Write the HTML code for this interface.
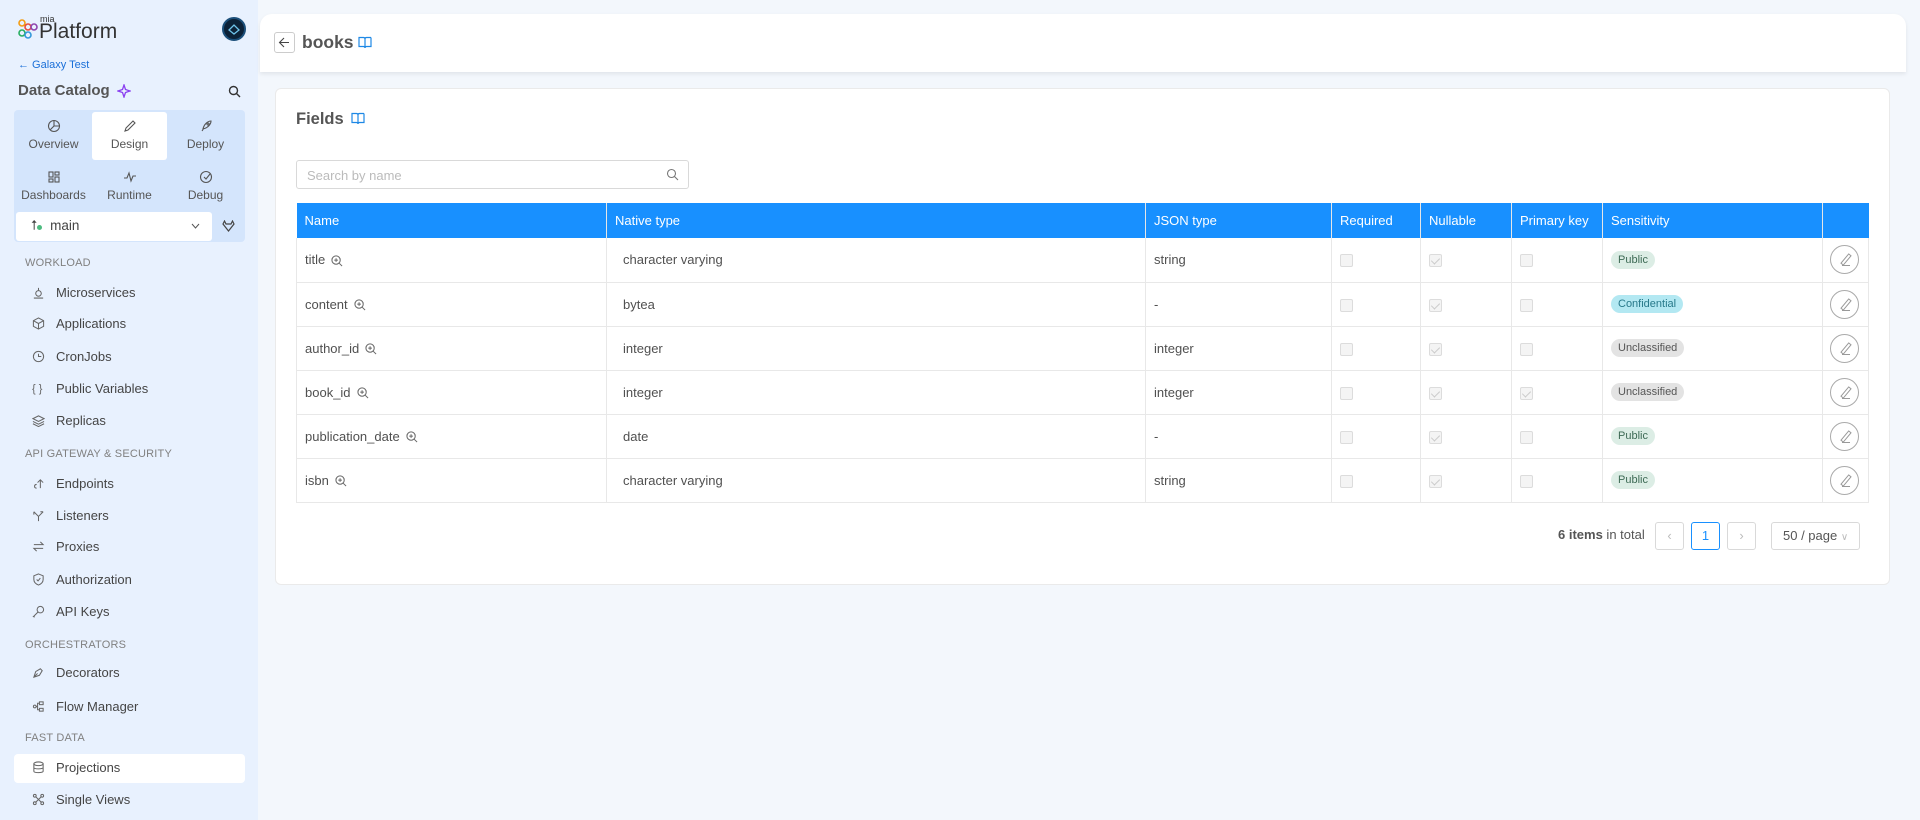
<!DOCTYPE html>
<html><head><meta charset="utf-8"><style>
*{box-sizing:border-box;margin:0;padding:0}
body{width:1920px;height:820px;overflow:hidden;background:#f3f7fc;font-family:"Liberation Sans",sans-serif;color:#444;position:relative}
.sb{position:absolute;left:0;top:0;width:258px;height:820px;background:#e8f1fe}
.abs{position:absolute}
.nav{position:absolute;left:32px;font-size:13px;color:#454545;display:flex;align-items:center}
.nav svg{width:13px;height:13px;margin-right:11px;stroke:#666;fill:none;stroke-width:1.1}
.sec{position:absolute;left:25px;font-size:11px;color:#808080;letter-spacing:.2px}
.tab{position:absolute;width:75px;text-align:center;font-size:12px;color:#555}
.tab svg{display:block;margin:0 auto 4px;width:14px;height:14px;stroke:#555;fill:none;stroke-width:1.1}
.card{position:absolute;background:#fff}
table{border-collapse:collapse;position:absolute;left:296px;top:203px;width:1573px;font-size:13px}
th{background:#1890ff;color:#fff;font-weight:normal;text-align:left;height:35px;padding-left:8px;border-right:1px solid #e6e6e6}
td{height:44px;border-bottom:1px solid #e8e8e8;border-right:1px solid #e8e8e8;padding-left:8px;color:#505050}
td:first-child{border-left:1px solid #e8e8e8}
.cb{display:inline-block;width:13px;height:13px;border:1px solid #dcdcdc;background:#f4f4f4;border-radius:2px;vertical-align:middle;position:relative}
.cb.c:after{content:"";position:absolute;left:3px;top:1px;width:4px;height:7px;border:solid #ccc;border-width:0 1px 1px 0;transform:rotate(45deg)}
.tag{display:inline-block;font-size:11px;padding:3px 7px;border-radius:10px}
.pub{background:#dcede5;color:#3d6a55}.con{background:#b3e8f2;color:#27798a}.unc{background:#e3e3e3;color:#555}
.ed{display:inline-block;width:29px;height:29px;border:1px solid #aaa;border-radius:50%;vertical-align:middle;position:relative;margin-left:-1px}
.ed:after{content:"";position:absolute;left:13px;top:7px;width:2px;height:11px;border:1px solid #999;transform:rotate(40deg)}
.ed:before{content:"";position:absolute;left:11px;top:19px;width:8px;border-top:1px solid #999}
.zi{width:12px;height:12px;vertical-align:middle;margin-left:6px;stroke:#666;fill:none;stroke-width:1.1}
.pg{position:absolute;top:522px;height:28px;border:1px solid #d9d9d9;border-radius:3px;background:#fff;font-size:13px;text-align:center;line-height:26px;color:#bbb}
</style></head><body>
<div class="sb">
  <svg class="abs" style="left:17px;top:18px" width="22" height="22" viewBox="0 0 22 22" fill="none" stroke-width="1.6"><circle cx="5" cy="5" r="3" stroke="#f39c12"/><circle cx="11" cy="9" r="3" stroke="#e74c3c"/><circle cx="17" cy="9" r="3" stroke="#8e44ad"/><circle cx="5" cy="15" r="3" stroke="#27ae60"/><circle cx="11" cy="17" r="3" stroke="#3498db"/></svg>
  <div class="abs" style="left:40px;top:14px;font-size:9px;color:#333">mia</div>
  <div class="abs" style="left:39px;top:20px;font-size:21px;color:#333">Platform</div>
  <div class="abs" style="left:222px;top:17px;width:24px;height:24px;border-radius:50%;background:#0c2238;border:2px solid #1b4f7a"><svg width="20" height="20" viewBox="0 0 20 20" style="position:absolute;left:0;top:0"><path d="M5 11 L10 6 L15 11 L10 15 Z" stroke="#6fc3ea" fill="none" stroke-width="1.3"/></svg></div>
  <div class="abs" style="left:18px;top:59px;font-size:11px;color:#1a6fd8">← Galaxy Test</div>
  <div class="abs" style="left:18px;top:82px;font-size:15px;font-weight:bold;color:#555">Data Catalog</div>
  <svg class="abs" style="left:117px;top:84px" width="14" height="14" viewBox="0 0 14 14"><path d="M7 1 L8.5 5.5 L13 7 L8.5 8.5 L7 13 L5.5 8.5 L1 7 L5.5 5.5Z" fill="none" stroke="#8a3ff0" stroke-width="1.3"/></svg>
  <svg class="abs" style="left:228px;top:85px" width="13" height="13" viewBox="0 0 13 13"><circle cx="5.5" cy="5.5" r="4" stroke="#333" fill="none" stroke-width="1.4"/><path d="M8.5 8.5 L12 12" stroke="#333" stroke-width="1.4"/></svg>
  <div class="abs" style="left:14px;top:110px;width:231px;height:132px;background:#d4e5fc;border-radius:4px"></div>
  <div class="abs" style="left:92px;top:112px;width:75px;height:48px;background:#fff;border-radius:3px"></div>
  <div class="tab" style="left:16px;top:119px"><svg viewBox="0 0 14 14"><circle cx="7" cy="7" r="5.5"/><path d="M7 1.5V7H12.5M7 7L3 11"/></svg>Overview</div>
  <div class="tab" style="left:92px;top:119px"><svg viewBox="0 0 14 14"><path d="M2 12L3 9L10 2L12 4L5 11Z"/></svg>Design</div>
  <div class="tab" style="left:168px;top:119px"><svg viewBox="0 0 14 14"><path d="M4 10C5 5 9 2 12 2C12 5 9 9 4 10ZM3 12L5 9"/><circle cx="9" cy="5" r="1"/></svg>Deploy</div>
  <div class="tab" style="left:16px;top:170px"><svg viewBox="0 0 14 14"><rect x="2" y="2" width="4" height="5"/><rect x="8" y="2" width="4" height="3"/><rect x="2" y="9" width="4" height="3"/><rect x="8" y="7" width="4" height="5"/></svg>Dashboards</div>
  <div class="tab" style="left:92px;top:170px"><svg viewBox="0 0 14 14"><path d="M1 8H4L6 3L8 11L10 6H13"/></svg>Runtime</div>
  <div class="tab" style="left:168px;top:170px"><svg viewBox="0 0 14 14"><circle cx="7" cy="7" r="5.5"/><path d="M5 7L7 9L11 4"/></svg>Debug</div>
  <div class="abs" style="left:16px;top:212px;width:196px;height:29px;background:#fff;border-radius:3px"></div>
  <div class="abs" style="left:31px;top:218px;font-size:13.5px;color:#444">⭡<span style="display:inline-block;width:5px;height:5px;border-radius:50%;background:#4cbb7f;margin:0 4px 0 0"></span> main</div>
  <svg class="abs" style="left:191px;top:223px" width="9" height="6" viewBox="0 0 9 6"><path d="M1 1L4.5 5L8 1" stroke="#555" fill="none"/></svg>
  <svg class="abs" style="left:222px;top:220px" width="13" height="12" viewBox="0 0 13 12"><path d="M1 4L2.5 1L4 4H9L10.5 1L12 4L6.5 11Z" stroke="#444" fill="none" stroke-width="1.2"/></svg>
  <div class="sec" style="top:257px">WORKLOAD</div>
  <div class="nav" style="top:285px"><svg viewBox="0 0 14 14"><circle cx="7" cy="8" r="3"/><path d="M2 13H12M7 2V5"/></svg>Microservices</div>
  <div class="nav" style="top:316px"><svg viewBox="0 0 14 14"><path d="M7 1L12.5 4V10L7 13L1.5 10V4ZM1.5 4L7 7L12.5 4M7 7V13"/></svg>Applications</div>
  <div class="nav" style="top:349px"><svg viewBox="0 0 14 14"><circle cx="7" cy="7" r="5.5"/><path d="M7 4V7H10"/></svg>CronJobs</div>
  <div class="nav" style="top:381px"><span style="width:13px;margin-right:11px;font-size:11px;color:#666">{ }</span>Public Variables</div>
  <div class="nav" style="top:413px"><svg viewBox="0 0 14 14"><path d="M7 2L13 5L7 8L1 5ZM1 8L7 11L13 8M1 10.5L7 13.5L13 10.5"/></svg>Replicas</div>
  <div class="sec" style="top:448px">API GATEWAY &amp; SECURITY</div>
  <div class="nav" style="top:476px"><svg viewBox="0 0 14 14"><path d="M9 12V3M6 6L9 3L12 6M5 12C2 12 2 8 5 8"/></svg>Endpoints</div>
  <div class="nav" style="top:508px"><svg viewBox="0 0 14 14"><path d="M7 13V8L2 3M7 8L12 3M2 3V6M12 3H9"/></svg>Listeners</div>
  <div class="nav" style="top:539px"><svg viewBox="0 0 14 14"><path d="M2 5H12L9 2M12 9H2L5 12"/></svg>Proxies</div>
  <div class="nav" style="top:572px"><svg viewBox="0 0 14 14"><path d="M7 1L12 3V7C12 10 9.5 12 7 13C4.5 12 2 10 2 7V3Z"/><path d="M5 7L6.5 8.5L9 5.5"/></svg>Authorization</div>
  <div class="nav" style="top:604px"><svg viewBox="0 0 14 14"><circle cx="9" cy="5" r="3.5"/><path d="M6.5 7.5L1.5 12.5L3 13"/></svg>API Keys</div>
  <div class="sec" style="top:639px">ORCHESTRATORS</div>
  <div class="nav" style="top:665px"><svg viewBox="0 0 14 14"><path d="M2 12L4 6L9 3L11 5L8 10ZM2 12L6 8"/></svg>Decorators</div>
  <div class="nav" style="top:699px"><svg viewBox="0 0 14 14"><circle cx="3" cy="7" r="1.5"/><rect x="8" y="2" width="4" height="3"/><rect x="8" y="9" width="4" height="3"/><path d="M4.5 7H6V3.5H8M6 7V10.5H8"/></svg>Flow Manager</div>
  <div class="sec" style="top:732px">FAST DATA</div>
  <div class="abs" style="left:14px;top:754px;width:231px;height:29px;background:#fff;border-radius:4px"></div>
  <div class="nav" style="top:760px"><svg viewBox="0 0 14 14"><ellipse cx="7" cy="3" rx="5" ry="2"/><path d="M2 3V11C2 13 12 13 12 11V3M2 7C2 9 12 9 12 7"/></svg>Projections</div>
  <div class="nav" style="top:792px"><svg viewBox="0 0 14 14"><circle cx="3" cy="3" r="1.5"/><circle cx="11" cy="3" r="1.5"/><circle cx="3" cy="11" r="1.5"/><circle cx="11" cy="11" r="1.5"/><path d="M4 4L10 10M10 4L4 10"/></svg>Single Views</div>
</div>

<div class="card" style="left:260px;top:14px;width:1646px;height:58px;border-radius:12px 12px 0 0;box-shadow:0 2px 4px rgba(0,0,0,.08)"></div>
<div class="abs" style="left:274px;top:32px;width:21px;height:21px;border:1px solid #ccc;border-radius:3px;background:#fff"><svg width="19" height="19" viewBox="0 0 19 19"><path d="M14 9.5H5M9 5L4.5 9.5L9 14" stroke="#444" fill="none" stroke-width="1.1"/></svg></div>
<div class="abs" style="left:302px;top:32px;font-size:17.5px;font-weight:bold;color:#555">books</div>
<svg class="abs" style="left:358px;top:36px" width="14" height="13" viewBox="0 0 14 13"><path d="M1 1.5H5.5C6.5 1.5 7 2 7 3V12C7 11 6.5 10.5 5.5 10.5H1ZM13 1.5H8.5C7.5 1.5 7 2 7 3M13 1.5V10.5H8.5C7.5 10.5 7 11 7 12" stroke="#1e88e5" fill="none" stroke-width="1.2"/></svg>

<div class="card" style="left:275px;top:88px;width:1615px;height:497px;border-radius:6px;border:1px solid #eaeaea"></div>
<div class="abs" style="left:296px;top:110px;font-size:16.5px;font-weight:bold;color:#555">Fields</div>
<svg class="abs" style="left:351px;top:112px" width="14" height="13" viewBox="0 0 14 13"><path d="M1 1.5H5.5C6.5 1.5 7 2 7 3V12C7 11 6.5 10.5 5.5 10.5H1ZM13 1.5H8.5C7.5 1.5 7 2 7 3M13 1.5V10.5H8.5C7.5 10.5 7 11 7 12" stroke="#1e88e5" fill="none" stroke-width="1.2"/></svg>
<div class="abs" style="left:296px;top:160px;width:393px;height:29px;border:1px solid #d9d9d9;border-radius:3px;background:#fff;font-size:13px;color:#bbb;padding:7px 10px">Search by name</div>
<svg class="abs" style="left:666px;top:168px" width="13" height="13" viewBox="0 0 13 13"><circle cx="5.5" cy="5.5" r="4" stroke="#777" fill="none" stroke-width="1.1"/><path d="M8.5 8.5L12 12" stroke="#777" stroke-width="1.1"/></svg>

<table>
<colgroup><col style="width:310px"><col style="width:539px"><col style="width:186px"><col style="width:89px"><col style="width:91px"><col style="width:91px"><col style="width:220px"><col></colgroup>
<tr><th>Name</th><th>Native type</th><th>JSON type</th><th>Required</th><th>Nullable</th><th>Primary key</th><th>Sensitivity</th><th style="border-right:none"></th></tr>
<tr><td>title<svg class="zi" viewBox="0 0 13 13"><circle cx="5.5" cy="5.5" r="4.5"/><path d="M9 9L12 12M5.5 3.5V7.5M3.5 5.5H7.5"/></svg></td><td style="padding-left:16px">character varying</td><td>string</td><td><span class="cb"></span></td><td><span class="cb c"></span></td><td><span class="cb"></span></td><td><span class="tag pub">Public</span></td><td><span class="ed"></span></td></tr>
<tr><td>content<svg class="zi" viewBox="0 0 13 13"><circle cx="5.5" cy="5.5" r="4.5"/><path d="M9 9L12 12M5.5 3.5V7.5M3.5 5.5H7.5"/></svg></td><td style="padding-left:16px">bytea</td><td>-</td><td><span class="cb"></span></td><td><span class="cb c"></span></td><td><span class="cb"></span></td><td><span class="tag con">Confidential</span></td><td><span class="ed"></span></td></tr>
<tr><td>author_id<svg class="zi" viewBox="0 0 13 13"><circle cx="5.5" cy="5.5" r="4.5"/><path d="M9 9L12 12M5.5 3.5V7.5M3.5 5.5H7.5"/></svg></td><td style="padding-left:16px">integer</td><td>integer</td><td><span class="cb"></span></td><td><span class="cb c"></span></td><td><span class="cb"></span></td><td><span class="tag unc">Unclassified</span></td><td><span class="ed"></span></td></tr>
<tr><td>book_id<svg class="zi" viewBox="0 0 13 13"><circle cx="5.5" cy="5.5" r="4.5"/><path d="M9 9L12 12M5.5 3.5V7.5M3.5 5.5H7.5"/></svg></td><td style="padding-left:16px">integer</td><td>integer</td><td><span class="cb"></span></td><td><span class="cb c"></span></td><td><span class="cb c"></span></td><td><span class="tag unc">Unclassified</span></td><td><span class="ed"></span></td></tr>
<tr><td>publication_date<svg class="zi" viewBox="0 0 13 13"><circle cx="5.5" cy="5.5" r="4.5"/><path d="M9 9L12 12M5.5 3.5V7.5M3.5 5.5H7.5"/></svg></td><td style="padding-left:16px">date</td><td>-</td><td><span class="cb"></span></td><td><span class="cb c"></span></td><td><span class="cb"></span></td><td><span class="tag pub">Public</span></td><td><span class="ed"></span></td></tr>
<tr><td>isbn<svg class="zi" viewBox="0 0 13 13"><circle cx="5.5" cy="5.5" r="4.5"/><path d="M9 9L12 12M5.5 3.5V7.5M3.5 5.5H7.5"/></svg></td><td style="padding-left:16px">character varying</td><td>string</td><td><span class="cb"></span></td><td><span class="cb c"></span></td><td><span class="cb"></span></td><td><span class="tag pub">Public</span></td><td><span class="ed"></span></td></tr>
</table>

<div class="abs" style="left:1558px;top:527px;font-size:13px;color:#555"><b>6 items</b> in total</div>
<div class="pg" style="left:1655px;width:29px">‹</div>
<div class="pg" style="left:1691px;width:29px;border-color:#1890ff;color:#1890ff">1</div>
<div class="pg" style="left:1727px;width:29px">›</div>
<div class="pg" style="left:1771px;width:89px;color:#555;text-align:left;padding-left:11px">50 / page <span style="color:#bbb;font-size:10px">∨</span></div>
</body></html>
